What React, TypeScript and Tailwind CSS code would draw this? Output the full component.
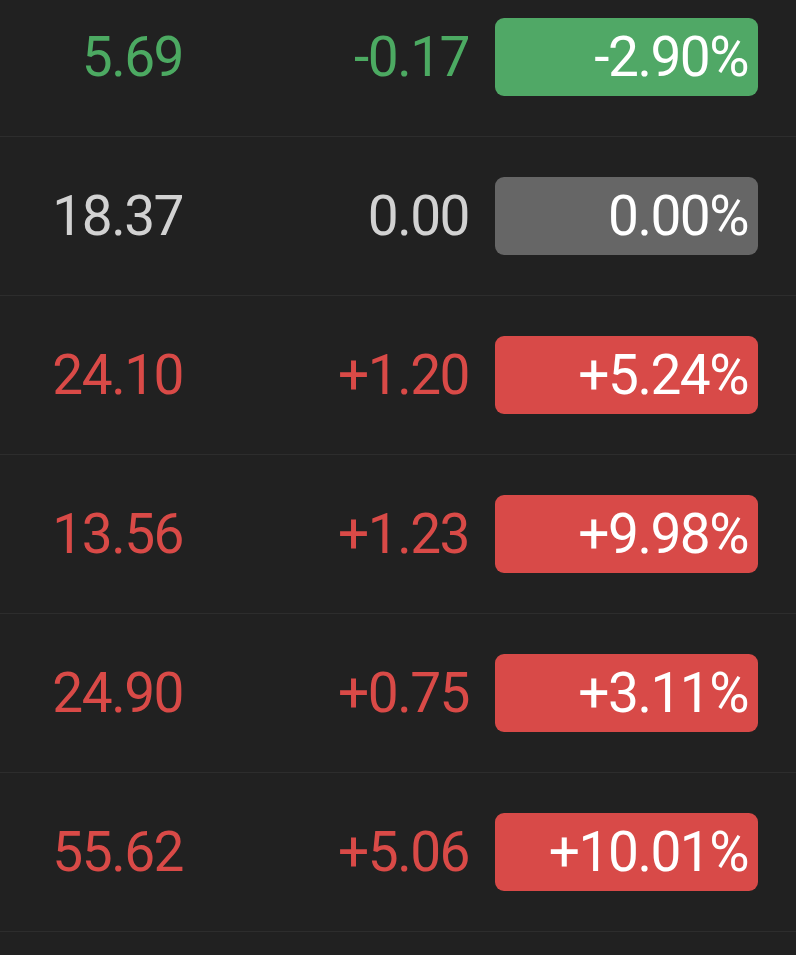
const rows = [
  { price: "5.69", change: "-0.17", pct: "-2.90%", tone: "down" },
  { price: "18.37", change: "0.00", pct: "0.00%", tone: "flat" },
  { price: "24.10", change: "+1.20", pct: "+5.24%", tone: "up" },
  { price: "13.56", change: "+1.23", pct: "+9.98%", tone: "up" },
  { price: "24.90", change: "+0.75", pct: "+3.11%", tone: "up" },
  { price: "55.62", change: "+5.06", pct: "+10.01%", tone: "up" },
];

const textTone: Record<string, string> = {
  down: "text-[#4caa62]",
  flat: "text-[#d2d2d2]",
  up: "text-[#d94a47]",
};

const badgeTone: Record<string, string> = {
  down: "bg-[#50a866]",
  flat: "bg-[#666666]",
  up: "bg-[#d84a48]",
};

export default function App() {
  return (
    <div className="min-h-[955px] bg-[#212121] overflow-hidden font-['Roboto',sans-serif]">
      <div className="-mt-[22px]">
        {rows.map((r) => (
          <div
            key={r.price}
            className="h-[159px] flex items-center border-b border-[#2d2d2d] pr-[38px] text-[55px] leading-none tracking-[-1.5px]"
          >
            <div className={`w-[183px] text-right ${textTone[r.tone]}`}>{r.price}</div>
            <div className={`flex-1 text-right ${textTone[r.tone]}`}>{r.change}</div>
            <div
              className={`ml-[26px] w-[263px] h-[78px] rounded-[9px] flex items-center justify-end pr-[10px] text-white ${badgeTone[r.tone]}`}
            >
              {r.pct}
            </div>
          </div>
        ))}
      </div>
    </div>
  );
}
